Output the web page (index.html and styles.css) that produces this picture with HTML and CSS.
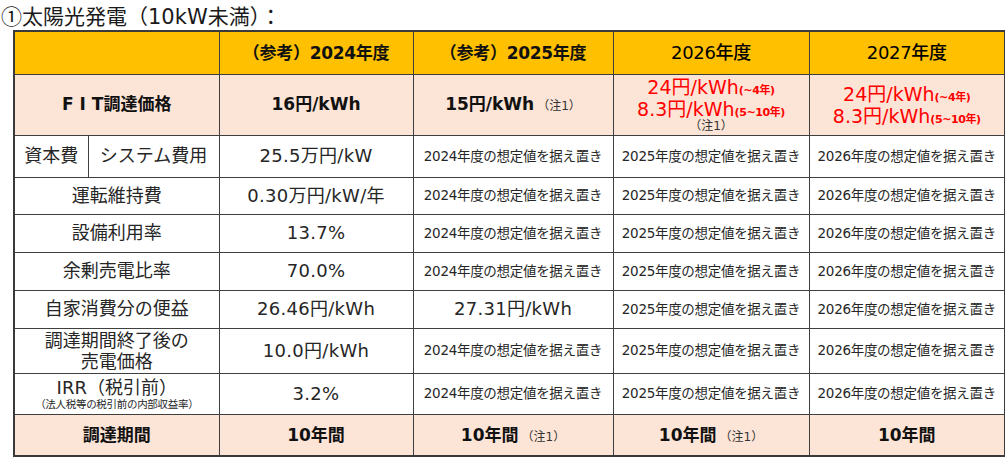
FILE: index.html
```html
<!DOCTYPE html>
<html lang="ja">
<head>
<meta charset="utf-8">
<link rel="stylesheet" href="styles.css">
</head>
<body>
<h1 class="title"><span class="circ">①</span>太陽光発電（10kW未満）：</h1>
<table class="grid">
  <colgroup>
    <col class="c-a"><col class="c-b"><col class="c-24"><col class="c-25"><col class="c-26"><col class="c-27">
  </colgroup>
  <tr class="head r-head">
    <th colspan="2"></th>
    <th>（参考）2024年度</th>
    <th>（参考）2025年度</th>
    <th class="plain">2026年度</th>
    <th class="plain">2027年度</th>
  </tr>
  <tr class="peach r-fit">
    <td colspan="2" class="bold">F I T調達価格</td>
    <td class="bold">16円/kWh</td>
    <td><span class="bold">15円/kWh</span><span class="note">（注1）</span></td>
    <td class="red-cell">
      <div class="red">24円/kWh<span class="sub">(~4年)</span></div>
      <div class="red">8.3円/kWh<span class="sub">(5~10年)</span></div>
      <div class="note-line">（注1）</div>
    </td>
    <td class="red-cell">
      <div class="red">24円/kWh<span class="sub">(~4年)</span></div>
      <div class="red">8.3円/kWh<span class="sub">(5~10年)</span></div>
    </td>
  </tr>
  <tr class="r-42">
    <td class="lbl">資本費</td>
    <td class="lbl">システム費用</td>
    <td class="val">25.5万円/kW</td>
    <td class="sm">2024年度の想定値を据え置き</td>
    <td class="sm">2025年度の想定値を据え置き</td>
    <td class="sm">2026年度の想定値を据え置き</td>
  </tr>
  <tr class="r-37">
    <td colspan="2" class="lbl">運転維持費</td>
    <td class="val">0.30万円/kW/年</td>
    <td class="sm">2024年度の想定値を据え置き</td>
    <td class="sm">2025年度の想定値を据え置き</td>
    <td class="sm">2026年度の想定値を据え置き</td>
  </tr>
  <tr class="r-38">
    <td colspan="2" class="lbl">設備利用率</td>
    <td class="val">13.7%</td>
    <td class="sm">2024年度の想定値を据え置き</td>
    <td class="sm">2025年度の想定値を据え置き</td>
    <td class="sm">2026年度の想定値を据え置き</td>
  </tr>
  <tr class="r-38">
    <td colspan="2" class="lbl">余剰売電比率</td>
    <td class="val">70.0%</td>
    <td class="sm">2024年度の想定値を据え置き</td>
    <td class="sm">2025年度の想定値を据え置き</td>
    <td class="sm">2026年度の想定値を据え置き</td>
  </tr>
  <tr class="r-38">
    <td colspan="2" class="lbl">自家消費分の便益</td>
    <td class="val">26.46円/kWh</td>
    <td class="val">27.31円/kWh</td>
    <td class="sm">2025年度の想定値を据え置き</td>
    <td class="sm">2026年度の想定値を据え置き</td>
  </tr>
  <tr class="r-45">
    <td colspan="2" class="lbl two">
      <div class="ln">調達期間終了後の</div>
      <div class="ln">売電価格</div>
    </td>
    <td class="val">10.0円/kWh</td>
    <td class="sm">2024年度の想定値を据え置き</td>
    <td class="sm">2025年度の想定値を据え置き</td>
    <td class="sm">2026年度の想定値を据え置き</td>
  </tr>
  <tr class="r-41">
    <td colspan="2" class="lbl irr">
      <div class="irr-main">IRR（税引前）</div>
      <div class="irr-sub">（法人税等の税引前の内部収益率）</div>
    </td>
    <td class="val">3.2%</td>
    <td class="sm">2024年度の想定値を据え置き</td>
    <td class="sm">2025年度の想定値を据え置き</td>
    <td class="sm">2026年度の想定値を据え置き</td>
  </tr>
  <tr class="peach r-42">
    <td colspan="2" class="bold">調達期間</td>
    <td class="bold">10年間</td>
    <td><span class="bold">10年間</span><span class="note">（注1）</span></td>
    <td><span class="bold">10年間</span><span class="note">（注1）</span></td>
    <td class="bold">10年間</td>
  </tr>
</table>
</body>
</html>
```
FILE: styles.css
```css
html, body {
  margin: 0;
  padding: 0;
  background: #ffffff;
}

body {
  font-family: "DejaVu Sans", "Noto Sans CJK JP", sans-serif;
  color: #262626;
}

.title {
  margin: 0;
  padding: 1px 0 0 1px;
  height: 29px;
  line-height: 28px;
  font-size: 21px;
  font-weight: 400;
  color: #1a1a1a;
}

.circ {
  font-family: "Noto Sans CJK JP", sans-serif;
}

.grid {
  margin-left: 13px;
  border-collapse: collapse;
  table-layout: fixed;
  width: 991px;
  border: 2px solid #3a3a3a;
}

.c-a { width: 74px; }
.c-b { width: 131px; }
.c-24 { width: 194px; }
.c-25 { width: 200px; }
.c-26 { width: 196px; }
.c-27 { width: 196px; }

.grid th,
.grid td {
  border: 1.5px solid #3f3f3f;
  padding: 0;
  text-align: center;
  vertical-align: middle;
  white-space: nowrap;
  line-height: 1.2;
}

.head th {
  background: #ffc000;
  font-size: 17px;
  font-weight: 700;
  color: #111;
  letter-spacing: -0.3px;
}

.head th.plain {
  font-weight: 500;
  font-size: 18px;
  color: #000;
}

.peach td {
  background: #fce4d6;
}

.r-head { height: 43px; }
.r-fit { height: 61px; }
.r-42 { height: 42px; }
.r-37 { height: 37px; }
.r-38 { height: 38px; }
.r-45 { height: 45px; }
.r-41 { height: 41px; }

.bold {
  font-size: 17px;
  font-weight: 700;
  color: #111;
}

.note {
  font-size: 12px;
  font-weight: 400;
  color: #333;
  margin-left: 3px;
}

.red-cell {
  line-height: 1;
}

.red {
  color: #ff0000;
  font-size: 19px;
  line-height: 22px;
  height: 22px;
}

.sub {
  font-size: 11px;
  font-weight: 700;
  letter-spacing: -0.4px;
}

.note-line {
  font-size: 12px;
  line-height: 13px;
  height: 13px;
  color: #333;
}

.lbl {
  font-size: 18px;
  color: #262626;
}

.lbl .ln {
  line-height: 21px;
  height: 21px;
}

.val {
  font-size: 18px;
  color: #262626;
  letter-spacing: 0.3px;
}

.sm {
  font-size: 13.5px;
  color: #262626;
  letter-spacing: -0.3px;
}

.irr-main {
  font-size: 18px;
  line-height: 21px;
  height: 21px;
}

.irr-sub {
  font-size: 10.5px;
  line-height: 12px;
  height: 12px;
  letter-spacing: -0.3px;
}
```
